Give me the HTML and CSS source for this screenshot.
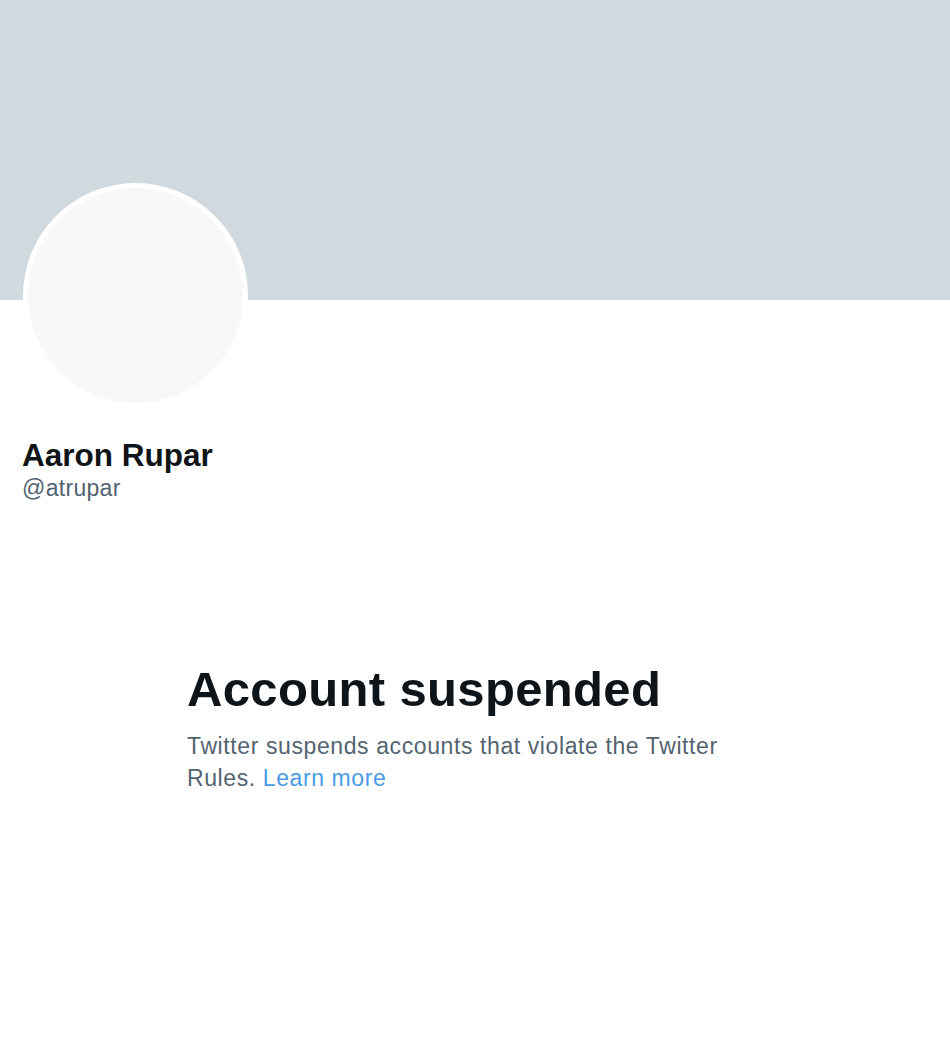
FILE: index.html
```html
<!DOCTYPE html>
<html lang="en">
<head>
<meta charset="utf-8">
<title>Aaron Rupar (@atrupar)</title>
<link rel="stylesheet" href="styles.css">
</head>
<body>
<div class="page">
  <div class="banner"></div>
  <div class="profile">
    <div class="avatar"><div class="avatar-inner"></div></div>
    <div class="name">Aaron Rupar</div>
    <div class="handle">@atrupar</div>
  </div>
  <div class="notice">
    <h1 class="title">Account suspended</h1>
    <p class="desc">Twitter suspends accounts that violate the Twitter Rules. <a class="link" href="#">Learn more</a></p>
  </div>
</div>
</body>
</html>
```
FILE: styles.css
```css
html, body {
  margin: 0;
  padding: 0;
  background: #ffffff;
}
body {
  font-family: "Liberation Sans", Arial, sans-serif;
  color: #0f1419;
}
.page {
  width: 950px;
  min-height: 1044px;
}
.banner {
  height: 300px;
  background: #cfd9de;
}
.profile {
  padding-left: 23px;
  display: flex;
  flex-direction: column;
}
.avatar {
  width: 225px;
  height: 225px;
  margin-top: -117px;
  border-radius: 50%;
  background: #ffffff;
  display: flex;
  align-items: center;
  justify-content: center;
}
.avatar-inner {
  width: 215px;
  height: 215px;
  border-radius: 50%;
  background: #f7f9f9;
}
.name {
  margin-top: 29px;
  margin-left: -1px;
  font-size: 31.5px;
  font-weight: 700;
  line-height: 36px;
  color: #0f1419;
}
.handle {
  margin-top: 0px;
  margin-left: -1px;
  font-size: 23px;
  line-height: 30px;
  color: #536471;
  letter-spacing: 0.3px;
}
.notice {
  margin-top: 157px;
  margin-left: 187px;
  width: 560px;
}
.title {
  margin: 0;
  font-size: 49px;
  font-weight: 800;
  line-height: 58px;
  color: #0f1419;
  letter-spacing: 0.35px;
}
.desc {
  margin: 12px 0 0 0;
  font-size: 23px;
  line-height: 32px;
  color: #536471;
  letter-spacing: 0.6px;
}
.link {
  color: #4a9be6;
  text-decoration: none;
}
```
